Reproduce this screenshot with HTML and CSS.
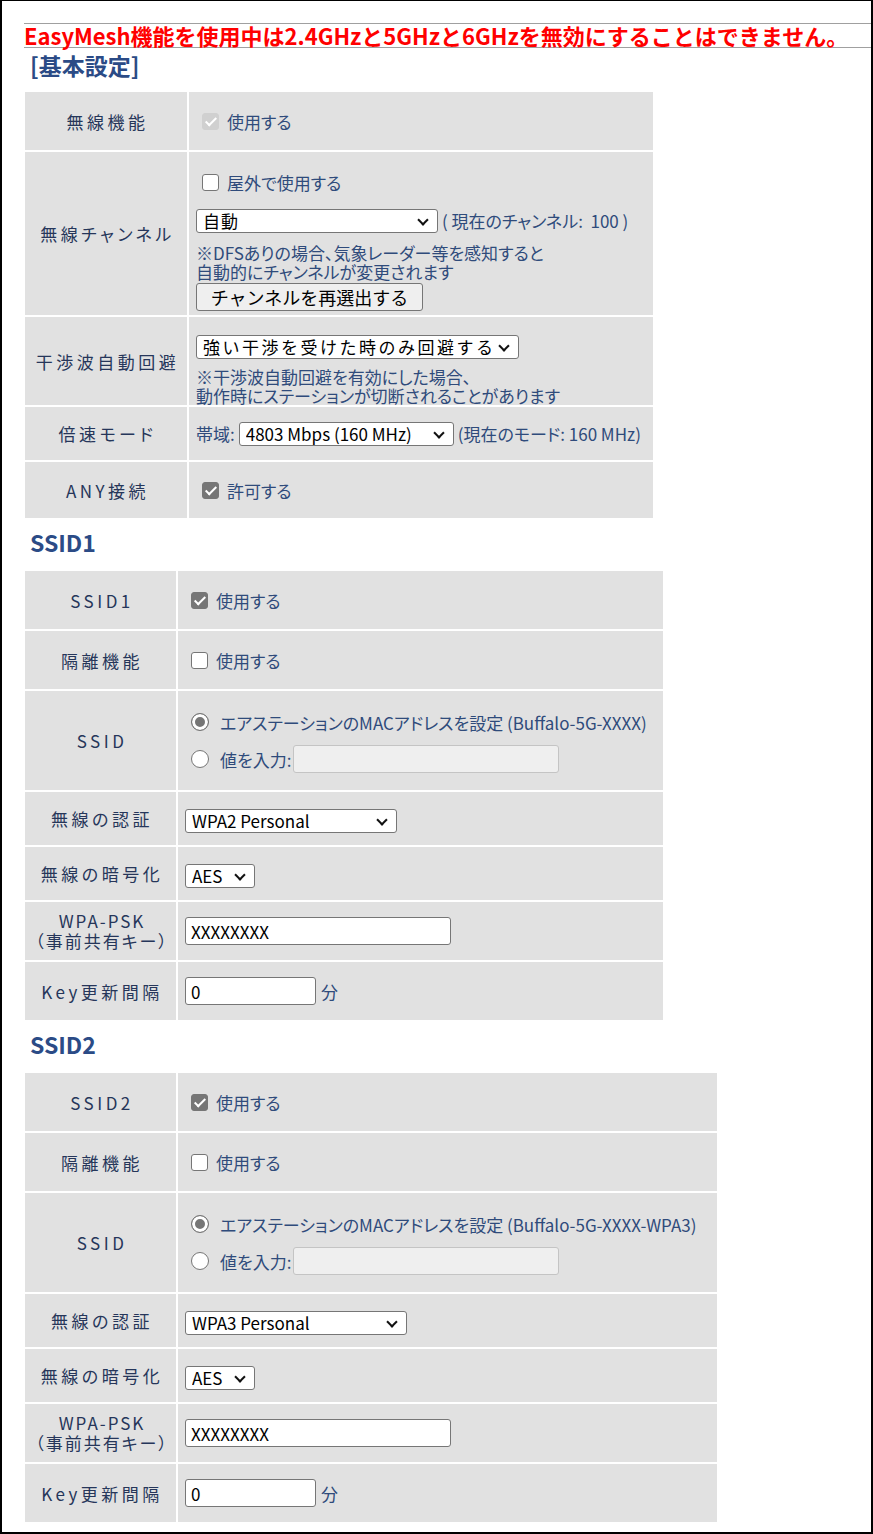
FILE: index.html
```html
<!DOCTYPE html>
<html lang="ja">
  <head>
    <meta charset="UTF-8" />
    <meta name="viewport" content="width=device-width, initial-scale=1.0" />
    <title>無線設定（5GHz）</title>
    <link rel="stylesheet" href="styles.css">
  </head>
  <body>
    <div id="page">
      <div class="warning">EasyMesh機能を使用中は2.4GHzと5GHzと6GHzを無効にすることはできません。</div>

      <h2 class="section-title first">[基本設定]</h2>
      <table class="setting basic">
        <tr class="h58">
          <th>無線機能</th>
          <td><label class="check"><input type="checkbox" checked disabled>使用する</label></td>
        </tr>
        <tr class="h163">
          <th>無線チャンネル</th>
          <td class="stack channel">
            <label class="check"><input type="checkbox">屋外で使用する</label>
            <div class="inline">
              <span class="select-wrap"><select class="sel-channel"><option>自動</option></select></span>
              <span>( 現在のチャンネル:&nbsp; 100 )</span>
            </div>
            <p class="note">※DFSありの場合、気象レーダー等を感知すると<br>自動的にチャンネルが変更されます</p>
            <button class="btn-reselect">チャンネルを再選出する</button>
          </td>
        </tr>
        <tr class="h88">
          <th>干渉波自動回避</th>
          <td class="stack avoid">
            <span class="select-wrap"><select class="sel-avoid"><option>強い干渉を受けた時のみ回避する</option></select></span>
            <p class="note">※干渉波自動回避を有効にした場合、<br>動作時にステーションが切断されることがあります</p>
          </td>
        </tr>
        <tr class="h53">
          <th>倍速モード</th>
          <td>
            <div class="inline">
              <span>帯域:</span>
              <span class="select-wrap"><select class="sel-band"><option>4803 Mbps (160 MHz)</option></select></span>
              <span>(現在のモード: 160 MHz)</span>
            </div>
          </td>
        </tr>
        <tr class="h56">
          <th>ANY接続</th>
          <td><label class="check"><input type="checkbox" checked>許可する</label></td>
        </tr>
      </table>

      <h2 class="section-title">SSID1</h2>
      <table class="setting ssid1">
        <tr class="h58">
          <th>SSID1</th>
          <td><label class="check"><input type="checkbox" checked>使用する</label></td>
        </tr>
        <tr class="h58">
          <th>隔離機能</th>
          <td><label class="check"><input type="checkbox">使用する</label></td>
        </tr>
        <tr class="h99">
          <th>SSID</th>
          <td>
            <label class="radio-line"><input type="radio" name="ssid1" checked>エアステーションのMACアドレスを設定 (Buffalo-5G-XXXX)</label>
            <label class="radio-line"><input type="radio" name="ssid1">値を入力:<input type="text" class="txt-ssid" disabled></label>
          </td>
        </tr>
        <tr class="h53">
          <th>無線の認証</th>
          <td><span class="select-wrap"><select class="sel-auth"><option>WPA2 Personal</option></select></span></td>
        </tr>
        <tr class="h53">
          <th>無線の暗号化</th>
          <td><span class="select-wrap"><select class="sel-enc"><option>AES</option></select></span></td>
        </tr>
        <tr class="h58">
          <th class="two-line">WPA-PSK<br>（事前共有キー）</th>
          <td><input type="text" class="txt-key" value="XXXXXXXX"></td>
        </tr>
        <tr class="h58">
          <th>Key更新間隔</th>
          <td><div class="inline"><input type="text" class="txt-interval" value="0"><span>分</span></div></td>
        </tr>
      </table>

      <h2 class="section-title">SSID2</h2>
      <table class="setting ssid2">
        <tr class="h58">
          <th>SSID2</th>
          <td><label class="check"><input type="checkbox" checked>使用する</label></td>
        </tr>
        <tr class="h58">
          <th>隔離機能</th>
          <td><label class="check"><input type="checkbox">使用する</label></td>
        </tr>
        <tr class="h99">
          <th>SSID</th>
          <td>
            <label class="radio-line"><input type="radio" name="ssid2" checked>エアステーションのMACアドレスを設定 (Buffalo-5G-XXXX-WPA3)</label>
            <label class="radio-line"><input type="radio" name="ssid2">値を入力:<input type="text" class="txt-ssid" disabled></label>
          </td>
        </tr>
        <tr class="h53">
          <th>無線の認証</th>
          <td><span class="select-wrap"><select class="sel-auth wpa3"><option>WPA3 Personal</option></select></span></td>
        </tr>
        <tr class="h53">
          <th>無線の暗号化</th>
          <td><span class="select-wrap"><select class="sel-enc"><option>AES</option></select></span></td>
        </tr>
        <tr class="h58">
          <th class="two-line">WPA-PSK<br>（事前共有キー）</th>
          <td><input type="text" class="txt-key" value="XXXXXXXX"></td>
        </tr>
        <tr class="h58">
          <th>Key更新間隔</th>
          <td><div class="inline"><input type="text" class="txt-interval" value="0"><span>分</span></div></td>
        </tr>
      </table>
    </div>
  </body>
</html>
```

FILE: styles.css
```css
html,
body {
  margin: 0;
  padding: 0;
}
body {
  font-family: "Noto Sans CJK JP", "Noto Sans", sans-serif;
  background-color: #fff;
}
#page {
  box-sizing: border-box;
  min-height: 100vh;
  border: 2px solid #000;
  border-top-width: 1px;
  padding: 22px 0 0 22px;
}
.warning {
  border-top: 1px solid #a0a0a0;
  border-bottom: 1px solid #a0a0a0;
  color: #ff0000;
  font-weight: bold;
  font-size: 22px;
  line-height: 23px;
  white-space: nowrap;
}
.section-title {
  margin: 7px 0 12px 6px;
  font-size: 23px;
  line-height: 30px;
  font-weight: bold;
  color: #2b4b86;
}
.section-title.first {
  margin: 2px 0 10px 6px;
}

/* setting tables */
.setting {
  border-spacing: 2px;
  table-layout: fixed;
  margin-left: -1px;
  font-feature-settings: "palt";
}
.setting.basic { width: 632px; }
.setting.ssid1 { width: 642px; }
.setting.ssid2 { width: 696px; }
.setting th,
.setting td {
  background-color: #e1e1e1;
  padding: 0 7px;
  vertical-align: middle;
  white-space: nowrap;
}
.setting th {
  font-weight: normal;
  font-size: 17px;
  letter-spacing: 3.5px;
  color: #26365a;
  text-align: center;
  padding: 0 2px 0 5px;
}
.setting.basic th { width: 155px; }
.setting.ssid1 th,
.setting.ssid2 th { width: 144px; }
.setting th.two-line {
  line-height: 20px;
  letter-spacing: 2px;
}
.setting td {
  font-size: 17px;
  color: #2f4b7b;
}
.h58 { height: 58px; }
.h163 { height: 163px; }
.h88 { height: 88px; }
.h53 { height: 53px; }
.h56 { height: 56px; }
.h99 { height: 99px; }

.setting td.stack {
  vertical-align: top;
}
.setting td.channel { padding-top: 18px; }
.setting td.avoid { padding-top: 15px; }

/* checkbox / radio */
.check {
  display: flex;
  align-items: center;
  height: 24px;
}
.check input {
  appearance: none;
  position: relative;
  box-sizing: border-box;
  width: 17px;
  height: 17px;
  margin: 0 8px 0 6px;
  border: 1.5px solid #767676;
  border-radius: 3px;
  background-color: #fff;
}
.check input:checked {
  background-color: #767676;
}
.check input:checked::after {
  content: "";
  position: absolute;
  left: 4.5px;
  top: 1px;
  width: 4px;
  height: 9px;
  border: solid #fff;
  border-width: 0 2.5px 2.5px 0;
  transform: rotate(45deg);
}
.check input:disabled {
  border-color: #d0d0d0;
  background-color: #d0d0d0;
}
.radio-line {
  display: flex;
  align-items: center;
  height: 28px;
}
.radio-line + .radio-line {
  margin-top: 9px;
}
.radio-line input[type="radio"] {
  appearance: none;
  box-sizing: border-box;
  width: 18px;
  height: 18px;
  margin: 0 11px 0 6px;
  border: 1.5px solid #767676;
  border-radius: 50%;
  background-color: #fff;
}
.radio-line input[type="radio"]:checked {
  background-color: #767676;
  box-shadow: inset 0 0 0 3px #fff;
}

.inline {
  display: flex;
  align-items: center;
  gap: 4px;
}
.channel .inline {
  margin-top: 14px;
}
.note {
  margin: 0;
  line-height: 19px;
}
.channel .note {
  margin-top: 10px;
}
.avoid .note {
  margin-top: 8px;
}

/* form controls */
select,
input[type="text"],
button {
  box-sizing: border-box;
  font-family: "Noto Sans CJK JP", "Noto Sans", sans-serif;
  color: #000;
  border: 1px solid #767676;
  border-radius: 3px;
  background-color: #fff;
}
.select-wrap {
  position: relative;
  display: inline-block;
  vertical-align: middle;
}
.select-wrap::after {
  content: "";
  position: absolute;
  right: 11px;
  top: 7px;
  width: 6px;
  height: 6px;
  border: solid #111;
  border-width: 0 2px 2px 0;
  transform: rotate(45deg);
  pointer-events: none;
}
select {
  appearance: none;
  display: block;
  height: 24px;
  font-size: 17px;
  line-height: 22px;
  padding: 0 26px 0 6px;
}
.sel-channel { width: 242px; letter-spacing: 1px; }
.sel-avoid { width: 323px; letter-spacing: 2.5px; }
.sel-band { width: 215px; }
.sel-auth { width: 212px; }
.sel-auth.wpa3 { width: 222px; }
.sel-enc { width: 70px; }

button {
  display: block;
  margin-top: 2px;
  width: 227px;
  height: 28px;
  font-size: 18px;
  line-height: 24px;
  background-color: #efefef;
  padding: 0;
}
input[type="text"] {
  height: 28px;
  font-size: 17px;
  padding: 0 5px;
}
input.txt-ssid {
  width: 266px;
  margin-left: 2px;
  background-color: #efefef;
  border-color: #c4c4c4;
}
input.txt-key { width: 266px; }
input.txt-interval { width: 131px; margin-right: 1px; }
```
